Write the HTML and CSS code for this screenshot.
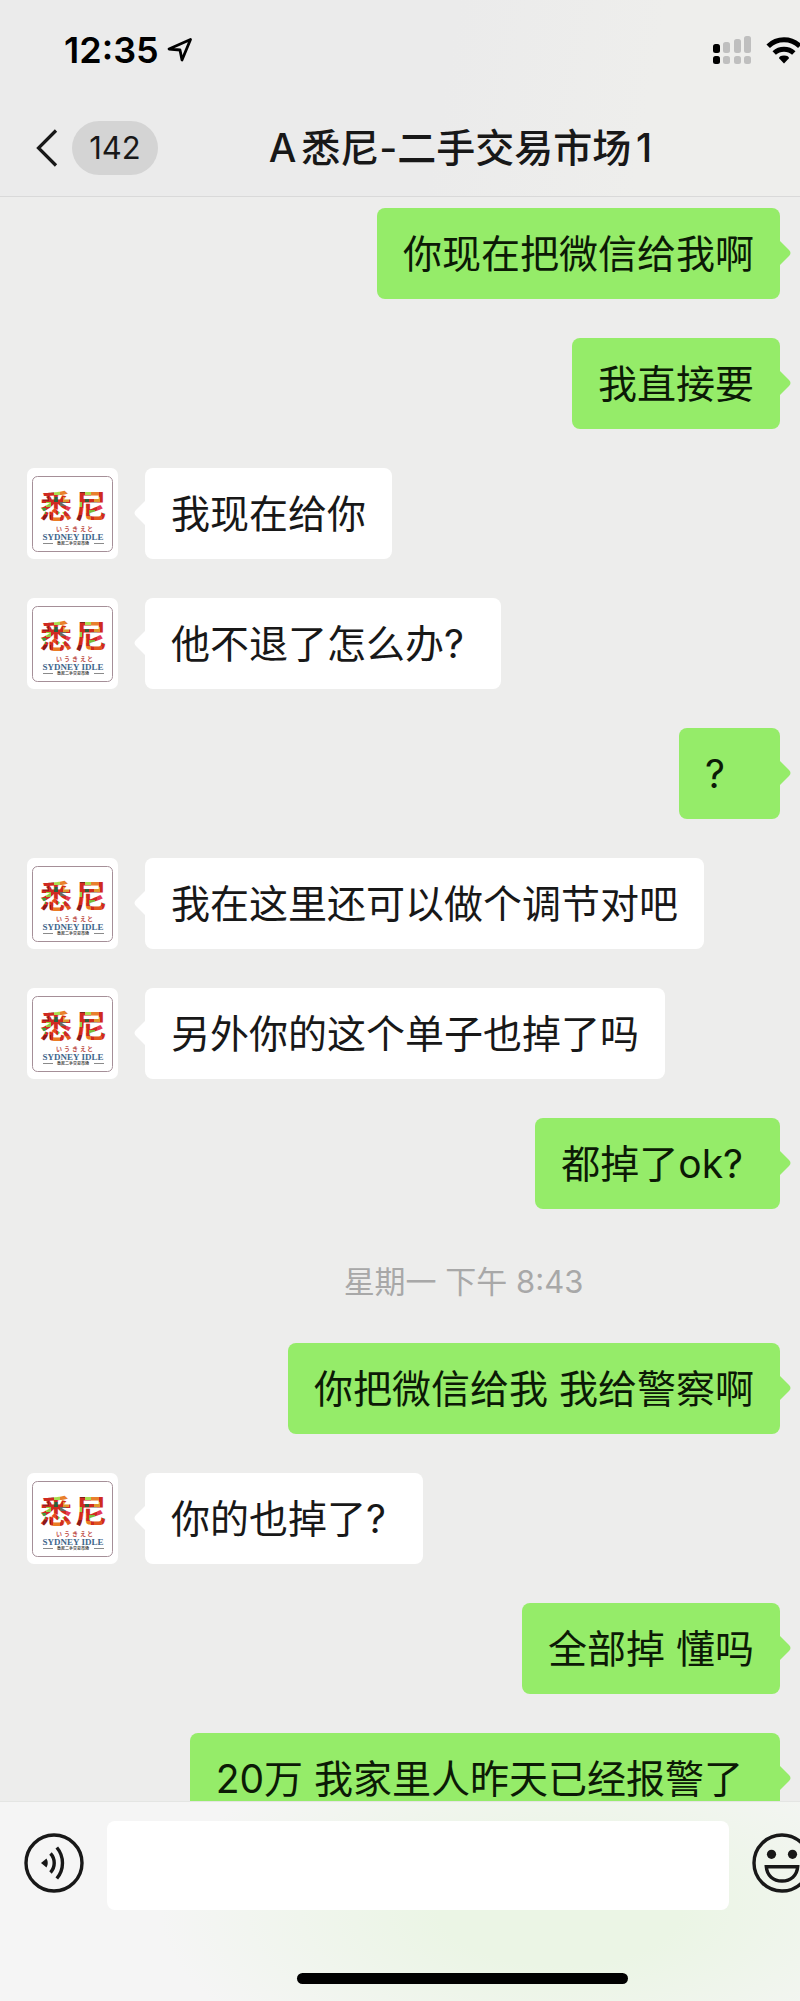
FILE: index.html
```html
<!DOCTYPE html>
<html lang="zh-CN">
<head>
<meta charset="utf-8">
<meta name="viewport" content="width=device-width, initial-scale=1">
<title>A悉尼-二手交易市场1</title>
<link rel="stylesheet" href="styles.css">
</head>
<body>
<svg class="defs" width="0" height="0" aria-hidden="true">
  <defs>
    <pattern id="mosaic" width="31" height="34" patternUnits="userSpaceOnUse" x="14" y="20">
      <rect width="31" height="34" fill="#cf2a20"/>
      <rect x="6" y="0" width="7" height="5" fill="#7e2018"/>
      <rect x="13" y="0" width="6" height="7" fill="#a8dc50"/>
      <rect x="19" y="3" width="8" height="5" fill="#e8802c"/>
      <rect x="2" y="8" width="6" height="5" fill="#9c1c1c"/>
      <rect x="13" y="9" width="4" height="5" fill="#2f5f38"/>
      <rect x="22" y="9" width="6" height="5" fill="#e0982c"/>
      <rect x="5" y="14" width="5" height="5" fill="#8fd044"/>
      <rect x="19" y="14" width="6" height="4" fill="#6a6a60"/>
      <rect x="25" y="17" width="6" height="5" fill="#e23a58"/>
      <rect x="0" y="20" width="5" height="6" fill="#48963f"/>
      <rect x="10" y="20" width="5" height="5" fill="#e84820"/>
      <rect x="17" y="22" width="6" height="5" fill="#78bc3a"/>
      <rect x="2" y="27" width="8" height="7" fill="#8c1a18"/>
      <rect x="12" y="28" width="7" height="6" fill="#ea7c24"/>
      <rect x="22" y="28" width="8" height="6" fill="#e0561f"/>
    </pattern>
    <symbol id="avatar" viewBox="0 0 91 91">
      <rect width="91" height="91" rx="7" fill="#fff"/>
      <rect x="5.500" y="8.500" width="80" height="75" rx="5" fill="none" stroke="#a58f98"/>
      <g class="logo-mark" fill="url(#mosaic)">
        <text x="13" y="50">悉</text>
        <text x="48" y="50">尼</text>
      </g>
      <text class="logo-kana" x="29 37 45 53 60" y="63">いうきえと</text>
      <text class="logo-name" x="46" y="72" text-anchor="middle">SYDNEY IDLE</text>
      <path d="M16 75.500h10M67 75.500h10" stroke="#8a8a8a"/>
      <text class="logo-sub" x="46" y="77" text-anchor="middle">悉尼二手交易市场</text>
    </symbol>
  </defs>
</svg>

<div class="screen">
  <header class="header">
    <div class="status">
      <span class="clock">12:35</span>
      <svg class="location" width="26" height="26" viewBox="0 0 26 26" aria-hidden="true">
        <path d="M2 12 23.500 2.500 15 23 13 13z" fill="none" stroke="#000" stroke-width="2.800" stroke-linejoin="round"/>
      </svg>
      <svg class="signal" width="40" height="28" viewBox="0 0 40 28" aria-hidden="true">
        <g fill="#000"><rect x="1" y="8" width="7" height="9" rx="2.500"/><rect x="1" y="20" width="7" height="8" rx="2.500"/></g>
        <g fill="#bfbfbf">
          <rect x="11" y="6" width="7" height="11" rx="2.500"/><rect x="11" y="20" width="7" height="8" rx="2.500"/>
          <rect x="22" y="3" width="7" height="14" rx="2.500"/><rect x="22" y="20" width="7" height="8" rx="2.500"/>
          <rect x="32" y="0" width="7" height="17" rx="2.500"/><rect x="32" y="20" width="7" height="8" rx="2.500"/>
        </g>
      </svg>
      <svg class="wifi" width="36" height="28" viewBox="0 0 36 28" aria-hidden="true">
        <g fill="none" stroke="#000" stroke-width="5">
          <path d="M2.200 10.200a22.500 22.500 0 0 1 31.600 0"/>
          <path d="M8.200 17a14.500 14.500 0 0 1 19.600 0"/>
        </g>
        <path d="M18 27.500 13 22.300q0-2.500 5-2.800 5 .300 5 2.800z" fill="#000"/>
      </svg>
    </div>
    <nav class="nav">
      <button class="back" type="button" aria-label="返回">
        <svg width="22" height="38" viewBox="0 0 22 38" aria-hidden="true"><path d="M20 1.500 2.500 19 20 36.500" fill="none" stroke="#181818" stroke-width="3.200"/></svg>
        <span class="unread">142</span>
      </button>
      <h1 class="title">A悉尼-二手交易市场1</h1>
    </nav>
  </header>

  <main class="chat">
    <div class="msg mine"><p class="bubble">你现在把微信给我啊</p></div>
    <div class="msg mine"><p class="bubble">我直接要</p></div>
    <div class="msg"><svg class="avatar" role="img" aria-label="悉尼"><use href="#avatar"/></svg><p class="bubble">我现在给你</p></div>
    <div class="msg"><svg class="avatar" role="img" aria-label="悉尼"><use href="#avatar"/></svg><p class="bubble">他不退了怎么办? </p></div>
    <div class="msg mine"><p class="bubble">?</p></div>
    <div class="msg"><svg class="avatar" role="img" aria-label="悉尼"><use href="#avatar"/></svg><p class="bubble">我在这里还可以做个调节对吧</p></div>
    <div class="msg"><svg class="avatar" role="img" aria-label="悉尼"><use href="#avatar"/></svg><p class="bubble">另外你的这个单子也掉了吗</p></div>
    <div class="msg mine"><p class="bubble">都掉了ok? </p></div>
    <time class="time">星期一 下午 8:43</time>
    <div class="msg mine"><p class="bubble">你把微信给我 我给警察啊</p></div>
    <div class="msg"><svg class="avatar" role="img" aria-label="悉尼"><use href="#avatar"/></svg><p class="bubble">你的也掉了? </p></div>
    <div class="msg mine"><p class="bubble">全部掉 懂吗</p></div>
    <div class="msg mine"><p class="bubble">20万 我家里人昨天已经报警了 </p></div>
  </main>

  <footer class="footer">
    <div class="composer">
      <button class="tool" type="button" aria-label="语音">
        <svg width="60" height="60" viewBox="0 0 60 60" aria-hidden="true">
          <g fill="none" stroke="#181818" stroke-width="3.400">
            <circle cx="30" cy="30" r="28"/>
            <path d="M26.500 20.500a14 14 0 0 1 0 19M32.800 14.500a24 24 0 0 1 0 31"/>
          </g>
          <path d="M17 30 22.500 25.500q2.500 4.500 0 9z" fill="#181818"/>
        </svg>
      </button>
      <input class="entry" type="text" aria-label="消息">
      <button class="tool" type="button" aria-label="表情">
        <svg width="60" height="60" viewBox="0 0 60 60" aria-hidden="true">
          <g fill="none" stroke="#181818" stroke-width="3.400">
            <circle cx="30" cy="30" r="28"/>
            <path d="M14.300 33.700h31.400c-.600 9-7 14.300-15.700 14.300s-15.100-5.300-15.700-14.300z"/>
          </g>
          <g fill="#181818"><circle cx="19.500" cy="21.300" r="4.600"/><circle cx="40.500" cy="21.300" r="4.600"/></g>
        </svg>
      </button>
    </div>
    <div class="home"><div class="home-indicator"></div></div>
  </footer>
</div>
</body>
</html>
```

FILE: styles.css
```css
* {
  box-sizing: border-box;
}

body {
  margin: 0;
  background: #ededec;
  color: #181818;
  font-family: Inter, "Noto Sans CJK SC", sans-serif;
}

button {
  padding: 0;
  border: 0;
  background: none;
  color: inherit;
  font: inherit;
}

svg {
  display: block;
  flex: none;
}

.defs {
  position: absolute;
}

.screen {
  display: flex;
  flex-direction: column;
  height: 100vh;
  overflow: hidden;
}

/* Header */
.header {
  flex: none;
  border-bottom: 1px solid #d9d9d9;
  background: linear-gradient(100deg, #ebebeb 55%, #eeeeec 80%);
}

.status {
  display: flex;
  align-items: center;
  height: 100px;
  padding-left: 64px;
}

.clock {
  color: #000;
  font-size: 36px;
  font-weight: 600;
  line-height: 44px;
}

.location {
  margin-left: 8px;
}

.signal {
  margin-left: auto;
}

.wifi {
  margin: 0 -2px 0 14px;
}

.nav {
  display: grid;
  grid-template-columns: 158px 1fr 37px;
  align-items: center;
  height: 96px;
}

.back {
  display: flex;
  align-items: center;
  justify-content: space-between;
  padding-left: 36px;
}

.unread {
  width: 86px;
  border-radius: 27px;
  background: #d4d4d4;
  font-size: 31px;
  line-height: 54px;
  text-align: center;
}

.title {
  margin: 0;
  font-size: 39px;
  font-weight: 500;
  line-height: 56px;
  text-align: center;
  text-autospace: normal;
  white-space: nowrap;
}

/* Conversation */
.chat {
  display: flex;
  flex: 1;
  flex-direction: column;
  gap: 39px;
  min-height: 0;
  padding: 11px 20px 0 27px;
  overflow: hidden;
}

.msg {
  display: flex;
  flex: none;
  gap: 27px;
}

.mine {
  justify-content: flex-end;
}

.avatar {
  width: 91px;
  height: 91px;
}

.bubble {
  position: relative;
  min-width: 101px;
  margin: 0;
  padding: 16px 26px;
  border-radius: 8px;
  background: #fff;
  font-size: 39px;
  line-height: 59px;
  white-space: pre-wrap;
}

.bubble::before {
  position: absolute;
  top: 32px;
  left: -11px;
  width: 12px;
  height: 26px;
  background: inherit;
  clip-path: path("M12 0 2 10Q-1 13 2 16L12 26Z");
  content: "";
}

.mine .bubble {
  background: #95ec69;
  color: #0c1a06;
}

.mine .bubble::before {
  right: -11px;
  left: auto;
  clip-path: path("M0 0 10 10Q13 13 10 16L0 26Z");
}

.time {
  flex: none;
  padding: 12px 0 0 120px;
  color: #a8a8a8;
  font-size: 31px;
  line-height: 44px;
  text-align: center;
}

.logo-mark {
  font: 700 32px "Noto Sans CJK SC", sans-serif;
}

.logo-kana {
  fill: #c0504a;
  font: 700 6px "Noto Sans CJK JP", sans-serif;
}

.logo-name {
  fill: #3f668c;
  font: 700 9px "Liberation Serif", serif;
}

.logo-sub {
  fill: #444;
  font: 700 4px "Noto Sans CJK SC", sans-serif;
}

/* Composer */
.footer {
  flex: none;
  height: 200px;
  border-top: 1px solid #e4e5e3;
  background:
    radial-gradient(ellipse 50% 90% at 70% 55%, #ebf5e5 30%, transparent),
    #f5f5f5;
}

.composer {
  display: flex;
  align-items: flex-start;
  gap: 23px;
  margin-right: -12px;
  padding: 19px 0 0 24px;
}

.tool {
  padding-top: 12px;
}

.entry {
  flex: 1;
  min-width: 0;
  height: 89px;
  padding: 0 20px;
  border: 0;
  border-radius: 8px;
  outline: 0;
  background: #fff;
  font: 39px Inter, "Noto Sans CJK SC", sans-serif;
}

.home {
  display: flex;
  justify-content: center;
  padding: 63px 0 0 124px;
}

.home-indicator {
  width: 331px;
  height: 11px;
  border-radius: 6px;
  background: #000;
}
```
